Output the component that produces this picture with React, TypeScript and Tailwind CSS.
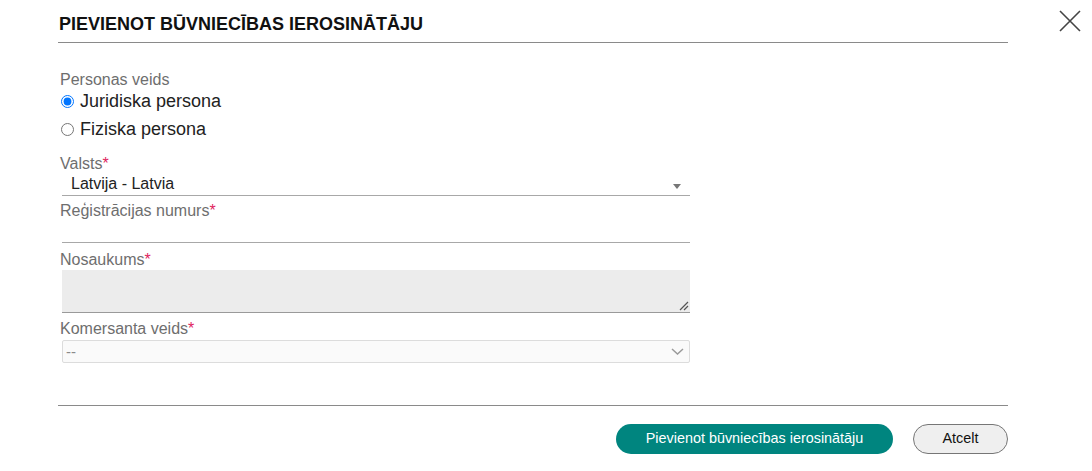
import React from "react"

const font = { fontFamily: '"Liberation Sans", Arial, sans-serif' }

function Label({ text, required }: { text: string; required?: boolean }) {
  return (
    <div className="pt-[2px] text-[16px] leading-[20px] text-[#6e6e6e]">
      {text}
      {required && <span className="text-[#e0245e]">*</span>}
    </div>
  )
}

export default function App() {
  return (
    <div
      className="relative w-[1092px] h-[471px] bg-white text-[#222] overflow-hidden"
      style={font}
    >
      {/* close */}
      <button className="absolute left-[1059px] top-[10px] w-[22px] h-[22px] text-[#444]">
        <svg viewBox="0 0 22 22" width="22" height="22" fill="none" stroke="currentColor" strokeWidth="1.6">
          <path d="M1 1 L21 21 M21 1 L1 21" />
        </svg>
      </button>

      <div className="ml-[58px] w-[950px]">
        {/* header */}
        <div className="h-[43px] pt-[13px] border-b border-[#8a8a8a] pl-[1px]">
          <h2 className="text-[18px] leading-[22px] font-bold text-[#111]">
            PIEVIENOT BŪVNIECĪBAS IEROSINĀTĀJU
          </h2>
        </div>

        {/* form */}
        <div className="w-[632px] pl-[2px] pt-[25px] flex flex-col">
          <Label text="Personas veids" />
          <label className="flex items-center h-[22px] pl-[1px] gap-[6px] text-[18px] leading-[22px] text-[#222]">
            <input type="radio" name="pt" defaultChecked className="w-[13px] h-[13px] m-0" />
            Juridiska persona
          </label>
          <label className="mt-[6px] flex items-center h-[22px] pl-[1px] gap-[6px] text-[18px] leading-[22px] text-[#222]">
            <input type="radio" name="pt" className="w-[13px] h-[13px] m-0" />
            Fiziska persona
          </label>

          <div className="mt-[12px]">
            <Label text="Valsts" required />
          </div>
          <div className="ml-[2px] h-[22px] border-b border-[#a8a8a8] flex items-start justify-between pl-[9px] pr-[9px]">
            <span className="text-[16px] leading-[20px] text-[#222]">Latvija - Latvia</span>
            <span className="w-0 h-0 border-l-[4px] border-r-[4px] border-t-[5px] border-l-transparent border-r-transparent border-t-[#777] mt-[10px]" />
          </div>

          <div className="mt-[3px]">
            <Label text="Reģistrācijas numurs" required />
          </div>
          <div className="ml-[2px] h-[22px] border-b border-[#a8a8a8]" />

          <div className="mt-[5px]">
            <Label text="Nosaukums" required />
          </div>
          <div className="relative ml-[2px] h-[43px] bg-[#ececec] border-b border-[#9a9a9a]">
            <svg className="absolute right-[1px] bottom-[1px]" width="10" height="10" viewBox="0 0 10 10" stroke="#555" strokeWidth="1.2">
              <path d="M1 9 L9 1 M5 9 L9 5" />
            </svg>
          </div>

          <div className="mt-[4px]">
            <Label text="Komersanta veids" required />
          </div>
          <div className="ml-[2px] mt-[1px] h-[23px] border border-[#dcdcdc] rounded-[2px] bg-[#fafafa] flex items-center justify-between pl-[3px] pr-[5px]">
            <span className="text-[15px] text-[#8a8a8a] leading-none">--</span>
            <svg width="13" height="7" viewBox="0 0 13 7" fill="none" stroke="#9a9a9a" strokeWidth="1.5">
              <path d="M1 1 L6.5 6 L12 1" />
            </svg>
          </div>
        </div>

        {/* footer */}
        <div className="mt-[42px] border-t border-[#8a8a8a] pt-[18px] flex justify-end gap-[20px]">
          <button className="h-[30px] w-[277px] rounded-full bg-[#00857f] text-white text-[14.4px]">
            Pievienot būvniecības ierosinātāju
          </button>
          <button className="h-[30px] w-[95px] rounded-full bg-[#efefef] border border-[#767676] text-[#111] text-[14.4px]">
            Atcelt
          </button>
        </div>
      </div>
    </div>
  )
}
